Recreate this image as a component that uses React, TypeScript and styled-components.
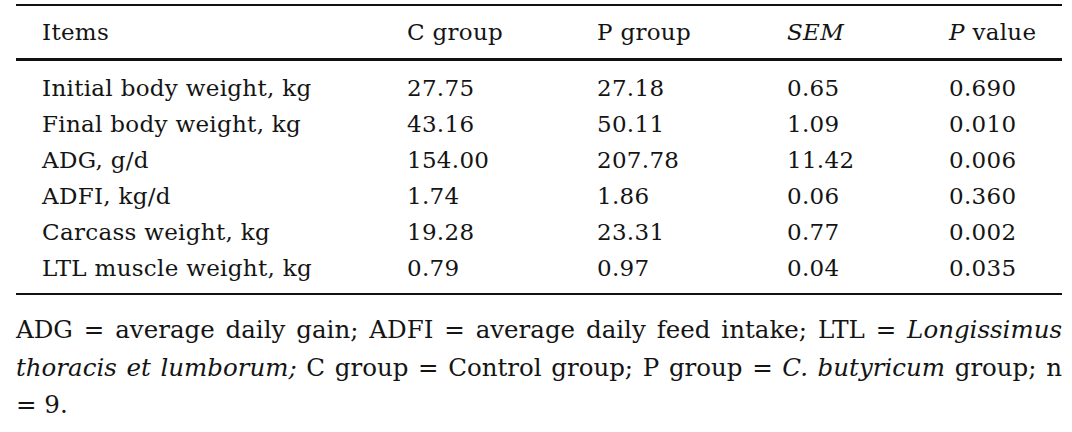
import React from "react";
import styled, { createGlobalStyle } from "styled-components";

const GlobalStyle = createGlobalStyle`
  html, body {
    margin: 0;
    padding: 0;
    background: #fff;
  }
  body {
    font-family: "DejaVu Serif", "Liberation Serif", serif;
    color: #141414;
  }
`;

const Page = styled.div`
  width: 1046px;
  padding: 4px 10px 0 16px;
`;

const Table = styled.div`
  border-top: 2px solid #111;
  border-bottom: 2px solid #111;
`;

const Row = styled.div<{ $head?: boolean }>`
  display: grid;
  grid-template-columns: 365px 190px 190px 162px 1fr;
  padding-left: 26px;
  align-items: center;
  height: ${(p) => (p.$head ? "52px" : "36px")};
  font-size: 23px;
  letter-spacing: 0.3px;
  ${(p) => p.$head && "border-bottom: 3px solid #111;"}
`;

const Body = styled.div`
  padding: 9px 0 7px;
`;

const Cell = styled.div`
  white-space: nowrap;
`;

const Note = styled.p`
  margin: 16px 0 0;
  font-size: 24.5px;
  line-height: 37.5px;
  text-align: justify;
`;

const rows = [
  ["Initial body weight, kg", "27.75", "27.18", "0.65", "0.690"],
  ["Final body weight, kg", "43.16", "50.11", "1.09", "0.010"],
  ["ADG, g/d", "154.00", "207.78", "11.42", "0.006"],
  ["ADFI, kg/d", "1.74", "1.86", "0.06", "0.360"],
  ["Carcass weight, kg", "19.28", "23.31", "0.77", "0.002"],
  ["LTL muscle weight, kg", "0.79", "0.97", "0.04", "0.035"],
];

export default function App() {
  return (
    <>
      <GlobalStyle />
      <Page>
        <Table>
          <Row $head>
            <Cell>Items</Cell>
            <Cell>C group</Cell>
            <Cell>P group</Cell>
            <Cell><i>SEM</i></Cell>
            <Cell><i>P</i> value</Cell>
          </Row>
          <Body>
            {rows.map((r) => (
              <Row key={r[0]}>
                {r.map((c, i) => (
                  <Cell key={i}>{c}</Cell>
                ))}
              </Row>
            ))}
          </Body>
        </Table>
        <Note>
          ADG = average daily gain; ADFI = average daily feed intake; LTL = <i>Longissimus thoracis et lumborum;</i> C
          group = Control group; P group = <i>C. butyricum</i> group; n = 9.
        </Note>
      </Page>
    </>
  );
}
